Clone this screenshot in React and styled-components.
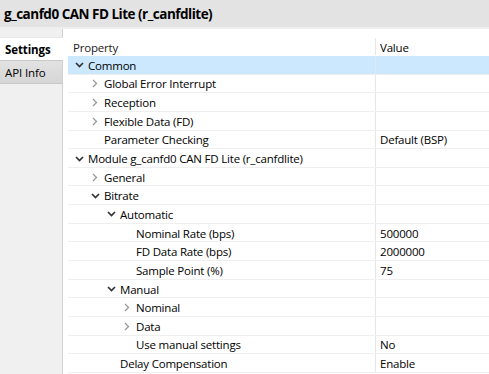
import React from 'react'
import styled, { createGlobalStyle } from 'styled-components'

const GlobalStyle = createGlobalStyle`
  html, body {
    margin: 0;
    padding: 0;
    background: #fff;
  }
  body {
    font-family: 'Open Sans', 'Noto Sans', sans-serif;
    color: #000;
  }
`

const Window = styled.div`
  width: 489px;
  height: 374px;
  display: flex;
  flex-direction: column;
  overflow: hidden;
`

const TitleBar = styled.div`
  height: 27px;
  line-height: 28px;
  background: #e3e3e3;
  border-bottom: 2px solid #efefef;
  padding-left: 4px;
  font-size: 13.5px;
  letter-spacing: -0.5px;
  font-weight: 700;
  color: #000;
  white-space: nowrap;
`

const Body = styled.div`
  flex: 1;
  display: flex;
  min-height: 0;
`

const TabColumn = styled.div`
  width: 62px;
  flex-shrink: 0;
  background: #f0f0f0;
  border-right: 1px solid #d0d0d0;
  padding-top: 8px;
  display: flex;
  flex-direction: column;
`

const Tab = styled.div`
  height: 22px;
  line-height: 23px;
  padding-left: 5px;
  font-size: 11.5px;
  letter-spacing: -0.1px;
  font-weight: ${p => (p.active ? 700 : 400)};
  background: ${p => (p.active ? '#fff' : 'linear-gradient(#e2e2e2, #d6d6d6)')};
  margin-right: ${p => (p.active ? '-1px' : '0')};
  border-top: 1px solid ${p => (p.active ? '#e6e6e6' : '#c9c9c9')};
  border-bottom: ${p => (p.active ? 'none' : '1px solid #c9c9c9')};
  color: #000;
`

const Content = styled.div`
  flex: 1;
  background: #fff;
  padding: 9px 0 0 5px;
  min-width: 0;
`

const Grid = styled.div`
  display: flex;
  flex-direction: column;
`

const Row = styled.div`
  display: grid;
  grid-template-columns: 307px 1fr;
  height: ${p => (p.header ? '18px' : '18.65px')};
  box-sizing: border-box;
  border-bottom: 1px solid ${p => (p.header ? 'transparent' : '#efefef')};
  background: ${p => (p.selected ? '#cce8ff' : 'transparent')};
  font-size: 11.5px;
  letter-spacing: -0.2px;
  align-items: center;
`

const NameCell = styled.div`
  display: flex;
  align-items: center;
  height: 100%;
  padding-left: ${p => 6 + p.level * 16}px;
  padding-top: 1px;
  box-sizing: border-box;
  white-space: nowrap;
  overflow: hidden;
`

const ValueCell = styled.div`
  height: 100%;
  display: flex;
  align-items: center;
  border-left: 1px solid #e6e6e6;
  padding-left: 4px;
  padding-top: 1px;
  box-sizing: border-box;
  white-space: nowrap;
`

const HeaderName = styled.div`
  padding-left: 5px;
  padding-top: 1px;
  color: #222;
`

const Expander = styled.span`
  width: 14px;
  flex-shrink: 0;
  display: flex;
  align-items: center;
  padding-left: ${p => (p.open ? '1px' : '2px')};
  box-sizing: border-box;
`

const Chevron = ({ open }) =>
  open ? (
    <svg width="9" height="6" viewBox="0 0 9 6">
      <polyline points="1,1 4.5,4.5 8,1" fill="none" stroke="#333" strokeWidth="1.7" />
    </svg>
  ) : (
    <svg width="6" height="9" viewBox="0 0 6 9">
      <polyline points="1,1 4.5,4.5 1,8" fill="none" stroke="#999" strokeWidth="1.3" />
    </svg>
  )

const rows = [
  { label: 'Common', level: 0, exp: 'open', selected: true },
  { label: 'Global Error Interrupt', level: 1, exp: 'closed' },
  { label: 'Reception', level: 1, exp: 'closed' },
  { label: 'Flexible Data (FD)', level: 1, exp: 'closed' },
  { label: 'Parameter Checking', level: 1, value: 'Default (BSP)' },
  { label: 'Module g_canfd0 CAN FD Lite (r_canfdlite)', level: 0, exp: 'open' },
  { label: 'General', level: 1, exp: 'closed' },
  { label: 'Bitrate', level: 1, exp: 'open' },
  { label: 'Automatic', level: 2, exp: 'open' },
  { label: 'Nominal Rate (bps)', level: 3, value: '500000' },
  { label: 'FD Data Rate (bps)', level: 3, value: '2000000' },
  { label: 'Sample Point (%)', level: 3, value: '75' },
  { label: 'Manual', level: 2, exp: 'open' },
  { label: 'Nominal', level: 3, exp: 'closed' },
  { label: 'Data', level: 3, exp: 'closed' },
  { label: 'Use manual settings', level: 3, value: 'No' },
  { label: 'Delay Compensation', level: 2, value: 'Enable' },
]

const App = () => (
  <Window>
    <GlobalStyle />
    <TitleBar>g_canfd0 CAN FD Lite (r_canfdlite)</TitleBar>
    <Body>
      <TabColumn>
        <Tab active>Settings</Tab>
        <Tab>API Info</Tab>
      </TabColumn>
      <Content>
        <Grid>
          <Row header>
            <HeaderName>Property</HeaderName>
            <ValueCell>Value</ValueCell>
          </Row>
          {rows.map((r, i) => (
            <Row key={i} selected={r.selected}>
              <NameCell level={r.level}>
                <Expander open={r.exp === 'open'}>
                  {r.exp && <Chevron open={r.exp === 'open'} />}
                </Expander>
                {r.label}
              </NameCell>
              <ValueCell>{r.value}</ValueCell>
            </Row>
          ))}
        </Grid>
      </Content>
    </Body>
  </Window>
)

export default App
